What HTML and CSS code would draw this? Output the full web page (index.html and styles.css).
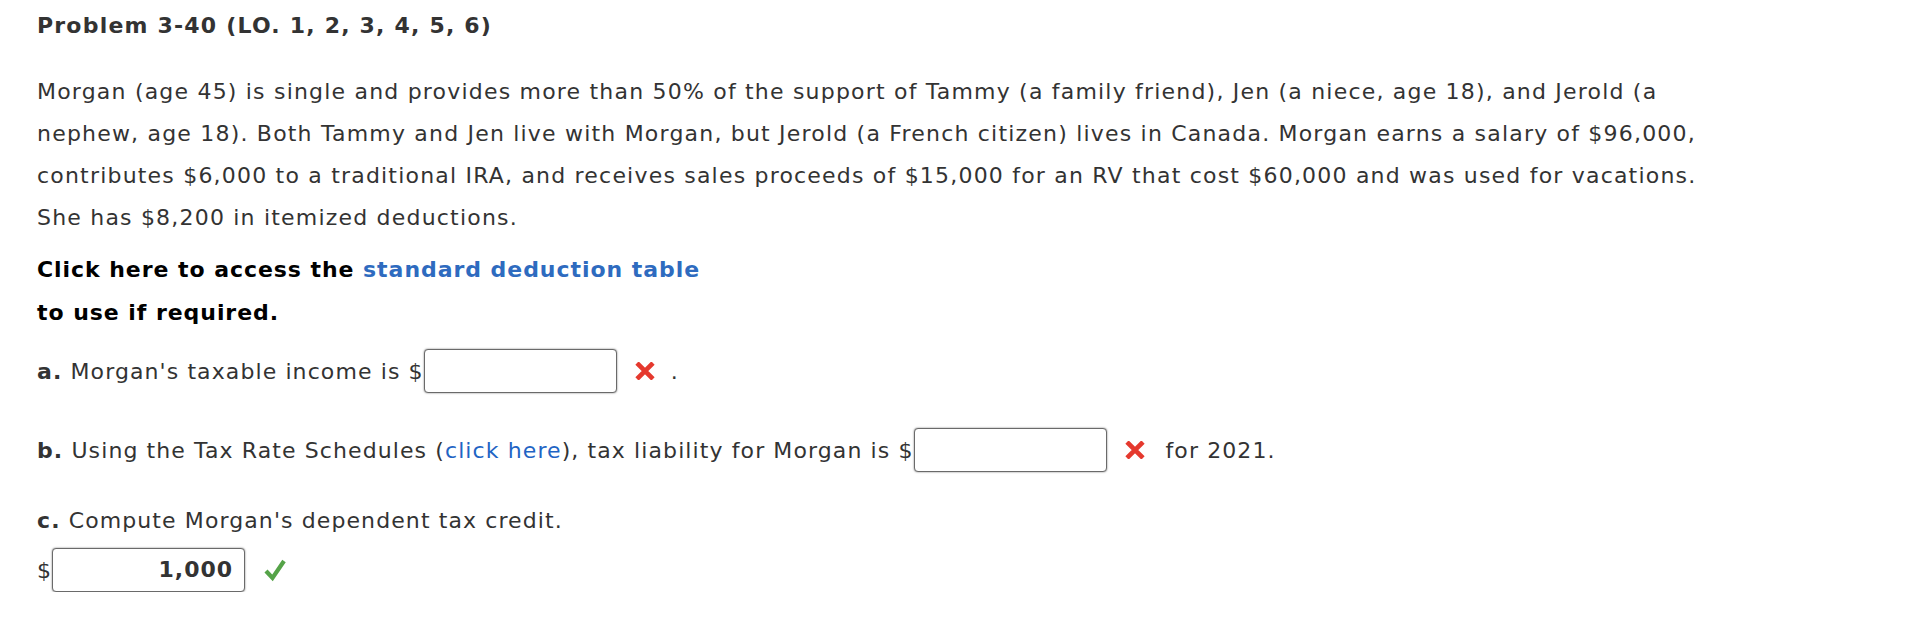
FILE: index.html
```html
<!DOCTYPE html>
<html>
<head>
<meta charset="utf-8">
<link rel="stylesheet" href="styles.css">
</head>
<body>
<div class="page">
  <div class="title">Problem 3-40 (LO. 1, 2, 3, 4, 5, 6)</div>
  <p class="body">Morgan (age 45) is single and provides more than 50% of the support of Tammy (a family friend), Jen (a niece, age 18), and Jerold (a<br>nephew, age 18). Both Tammy and Jen live with Morgan, but Jerold (a French citizen) lives in Canada. Morgan earns a salary of $96,000,<br>contributes $6,000 to a traditional IRA, and receives sales proceeds of $15,000 for an RV that cost $60,000 and was used for vacations.<br>She has $8,200 in itemized deductions.</p>
  <div class="access">Click here to access the <span class="link-bold">standard deduction table</span><br>to use if required.</div>

  <div class="row row-a">
    <span class="txt"><b class="lbl">a.</b> Morgan's taxable income is $</span>
    <span class="field"></span>
    <svg class="mark-x" viewBox="0 0 20 18" width="20" height="18"><path d="M2 1 L18 17 M18 1 L2 17" stroke="#e5392e" stroke-width="4.6" fill="none"/></svg>
    <span class="txt dot">.</span>
  </div>

  <div class="row row-b">
    <span class="txt"><b class="lbl">b.</b> Using the Tax Rate Schedules (<span class="link">click here</span>), tax liability for Morgan is $</span>
    <span class="field"></span>
    <svg class="mark-x" viewBox="0 0 20 18" width="20" height="18"><path d="M2 1 L18 17 M18 1 L2 17" stroke="#e5392e" stroke-width="4.6" fill="none"/></svg>
    <span class="txt after">for 2021.</span>
  </div>

  <div class="ctext"><b class="lbl">c.</b> Compute Morgan's dependent tax credit.</div>
  <div class="row row-c">
    <span class="txt">$</span>
    <span class="field filled">1,000</span>
    <svg class="mark-check" viewBox="0 0 22 24" width="22" height="24"><path d="M2 13 L8.5 20 L20 3" stroke="#55a348" stroke-width="4.2" fill="none" stroke-linejoin="miter"/></svg>
  </div>
</div>
</body>
</html>
```

FILE: styles.css
```css
html, body {
  margin: 0;
  padding: 0;
  background: #ffffff;
}

.page {
  padding: 11px 0 0 37px;
  font-family: "DejaVu Sans", Verdana, sans-serif;
  color: #333333;
  font-size: 22px;
  letter-spacing: 1.1px;
}

.title {
  font-weight: bold;
  font-size: 22px;
  line-height: 30px;
  letter-spacing: 1.2px;
  color: #333333;
}

.body {
  margin: 30px 0 0 0;
  line-height: 42px;
  white-space: nowrap;
  letter-spacing: 1.2px;
}

.access {
  margin-top: 9px;
  font-weight: bold;
  color: #000000;
  line-height: 43px;
  letter-spacing: 0.95px;
}

.link-bold {
  color: #2e6bbf;
}

.link {
  color: #1f64c4;
}

.lbl {
  font-weight: bold;
}

.row {
  display: flex;
  align-items: center;
}

.row-a {
  margin-top: 15px;
}

.row-b {
  margin-top: 35px;
}

.field {
  display: block;
  box-sizing: border-box;
  width: 193px;
  height: 44px;
  border: 1px solid #6a6a6a;
  border-radius: 4px;
  box-shadow: 0 0 2px rgba(0, 0, 0, 0.55);
  background: #fff;
}

.field.filled {
  font-weight: bold;
  font-size: 22px;
  letter-spacing: 1px;
  text-align: right;
  padding-right: 11px;
  line-height: 42px;
  color: #333;
}

.mark-x {
  margin-left: 18px;
}

.dot {
  margin-left: 16px;
}

.after {
  margin-left: 21px;
}

.ctext {
  margin-top: 28px;
  line-height: 42px;
}

.row-c {
  margin-top: 6px;
}

.mark-check {
  margin-left: 19px;
}
```
